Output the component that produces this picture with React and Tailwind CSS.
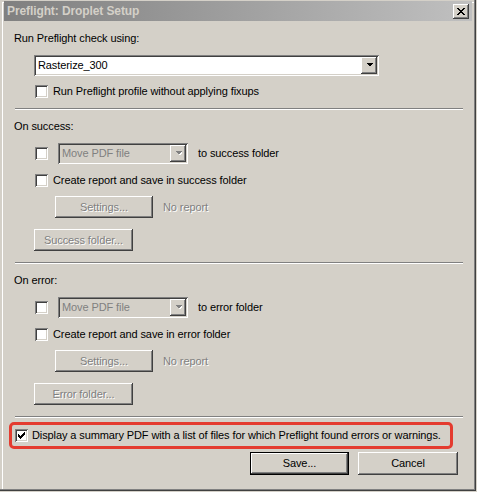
import React from "react";

const RAISED =
  "shadow-[inset_-1px_-1px_#404040,inset_1px_1px_#ffffff,inset_-2px_-2px_#808080,inset_2px_2px_#d4d0c8]";
const SUNKEN =
  "shadow-[inset_1px_1px_#808080,inset_-1px_-1px_#ffffff,inset_2px_2px_#404040,inset_-2px_-2px_#d4d0c8]";

function Check({ checked }) {
  return (
    <div className={`relative w-[13px] h-[13px] shrink-0 bg-white ${SUNKEN}`}>
      {checked && (
        <svg width="13" height="13" viewBox="0 0 13 13" className="absolute left-0 top-0" shapeRendering="crispEdges">
          <rect x="3" y="5" width="1" height="3" fill="#000" />
          <rect x="4" y="6" width="1" height="3" fill="#000" />
          <rect x="5" y="7" width="1" height="3" fill="#000" />
          <rect x="6" y="6" width="1" height="3" fill="#000" />
          <rect x="7" y="5" width="1" height="3" fill="#000" />
          <rect x="8" y="4" width="1" height="3" fill="#000" />
          <rect x="9" y="3" width="1" height="3" fill="#000" />
        </svg>
      )}
    </div>
  );
}

function Arrow({ disabled }) {
  return (
    <svg width="7" height="5" viewBox="0 0 7 5" shapeRendering="crispEdges">
      {disabled && <polygon points="1,1 8,1 4.5,4.5" fill="#ffffff" />}
      <polygon points="0,0 7,0 3.5,3.5" fill={disabled ? "#808080" : "#000"} />
    </svg>
  );
}

function Combo({ text, disabled, className }) {
  return (
    <div className={`flex items-stretch p-[2px] h-[21px] ${SUNKEN} ${disabled ? "bg-[#d4d0c8]" : "bg-white"} ${className}`}>
      <div className={`flex-1 flex items-center pl-[2px] leading-[13px] ${disabled ? "text-[#808080]" : "text-black"}`}>{text}</div>
      <div className={`w-[16px] flex items-center justify-center bg-[#d4d0c8] ${RAISED}`}>
        <Arrow disabled={disabled} />
      </div>
    </div>
  );
}

function Btn({ children, disabled, isDefault, className }) {
  const inner = (
    <div
      className={`flex-1 flex items-center justify-center bg-[#d4d0c8] ${RAISED} ${
        disabled ? "text-[#808080] [text-shadow:1px_1px_#ffffff]" : "text-black"
      }`}
    >
      {children}
    </div>
  );
  if (isDefault) {
    return <div className={`flex border border-black ${className}`}>{inner}</div>;
  }
  return <div className={`flex ${className}`}>{inner}</div>;
}

function Sep({ className }) {
  return <div className={`ml-[15px] w-[448px] h-[2px] border-t border-t-[#808080] border-b border-b-white ${className}`} />;
}

function Label({ children, className }) {
  return <div className={`h-[13px] leading-[13px] whitespace-nowrap ${className}`}>{children}</div>;
}

function Section({ kind, name, folderBtn, top }) {
  return (
    <>
      <Label className={`ml-[14px] ${top}`}>{kind}</Label>
      <div className="mt-[10px] flex items-center h-[21px]">
        <div className="ml-[35px]">
          <Check />
        </div>
        <Combo text="Move PDF file" disabled className="ml-[10px] w-[130px]" />
        <span className="ml-[10px] leading-[13px]">to {name} folder</span>
      </div>
      <div className="mt-[10px] flex items-center h-[13px]">
        <div className="ml-[35px]">
          <Check />
        </div>
        <span className="ml-[5px] leading-[13px]">Create report and save in {name} folder</span>
      </div>
      <div className="mt-[9px] flex items-center h-[22px]">
        <Btn disabled className="ml-[55px] w-[98px] h-[22px]">Settings...</Btn>
        <span className="ml-[10px] text-[#808080] [text-shadow:1px_1px_#ffffff]">No report</span>
      </div>
      <Btn disabled className="mt-[11px] ml-[34px] w-[99px] h-[22px]">{folderBtn}</Btn>
    </>
  );
}

export default function App() {
  return (
    <div
      className="relative w-[477px] h-[492px] bg-[#d4d0c8] flex flex-col text-[11px] tracking-[-0.1px] text-black shadow-[inset_-1px_-1px_#d4d0c8,inset_-2px_-2px_#404040,inset_-3px_-3px_#808080,inset_2px_2px_#d4d0c8,inset_3px_3px_#ffffff]"
      style={{ fontFamily: '"Liberation Sans", Arial, sans-serif' }}
    >
      {/* Title bar */}
      <div className="mt-[1px] ml-[4px] mr-[5px] h-[20px] bg-gradient-to-r from-[#808080] to-[#c0c0c0] flex items-center justify-between">
        <span className="ml-[3px] text-[12px] font-bold tracking-[-0.1px] text-[#d4d0c8] leading-[14px]">Preflight: Droplet Setup</span>
        <div className={`mr-[3px] w-[16px] h-[15px] bg-[#d4d0c8] flex items-center justify-center ${RAISED}`}>
          <svg width="8" height="7" viewBox="0 0 8 7" shapeRendering="crispEdges">
            <path d="M0 0h2v1h-2z M6 0h2v1h-2z M1 1h2v1h-2z M5 1h2v1h-2z M2 2h4v1h-4z M3 3h2v1h-2z M2 4h4v1h-4z M1 5h2v1h-2z M5 5h2v1h-2z M0 6h2v1h-2z M6 6h2v1h-2z" fill="#000" />
          </svg>
        </div>
      </div>

      <Label className="ml-[14px] mt-[11px]">Run Preflight check using:</Label>
      <Combo text="Rasterize_300" className="mt-[10px] ml-[34px] w-[345px]" />
      <div className="mt-[9px] flex items-center h-[13px]">
        <div className="ml-[35px]">
          <Check />
        </div>
        <span className="ml-[5px] leading-[13px]">Run Preflight profile without applying fixups</span>
      </div>
      <Sep className="mt-[10px]" />

      <Section kind="On success:" name="success" folderBtn="Success folder..." top="mt-[10px]" />
      <Sep className="mt-[11px]" />

      <Section kind="On error:" name="error" folderBtn="Error folder..." top="mt-[10px]" />
      <Sep className="mt-[11px]" />

      <div className="mt-[4px] ml-[9px] w-[444px] h-[27px] border-[3px] border-[#e43b2f] rounded-[5px] flex items-center">
        <div className="ml-[3px]">
          <Check checked />
        </div>
        <span className="ml-[4px] leading-[13px] whitespace-nowrap">
          Display a summary PDF with a list of files for which Preflight found errors or warnings.
        </span>
      </div>

      <div className="mt-[3px] flex">
        <Btn isDefault className="ml-[250px] w-[99px] h-[23px]">Save...</Btn>
        <Btn className="ml-[9px] w-[100px] h-[23px]">Cancel</Btn>
      </div>
    </div>
  );
}
